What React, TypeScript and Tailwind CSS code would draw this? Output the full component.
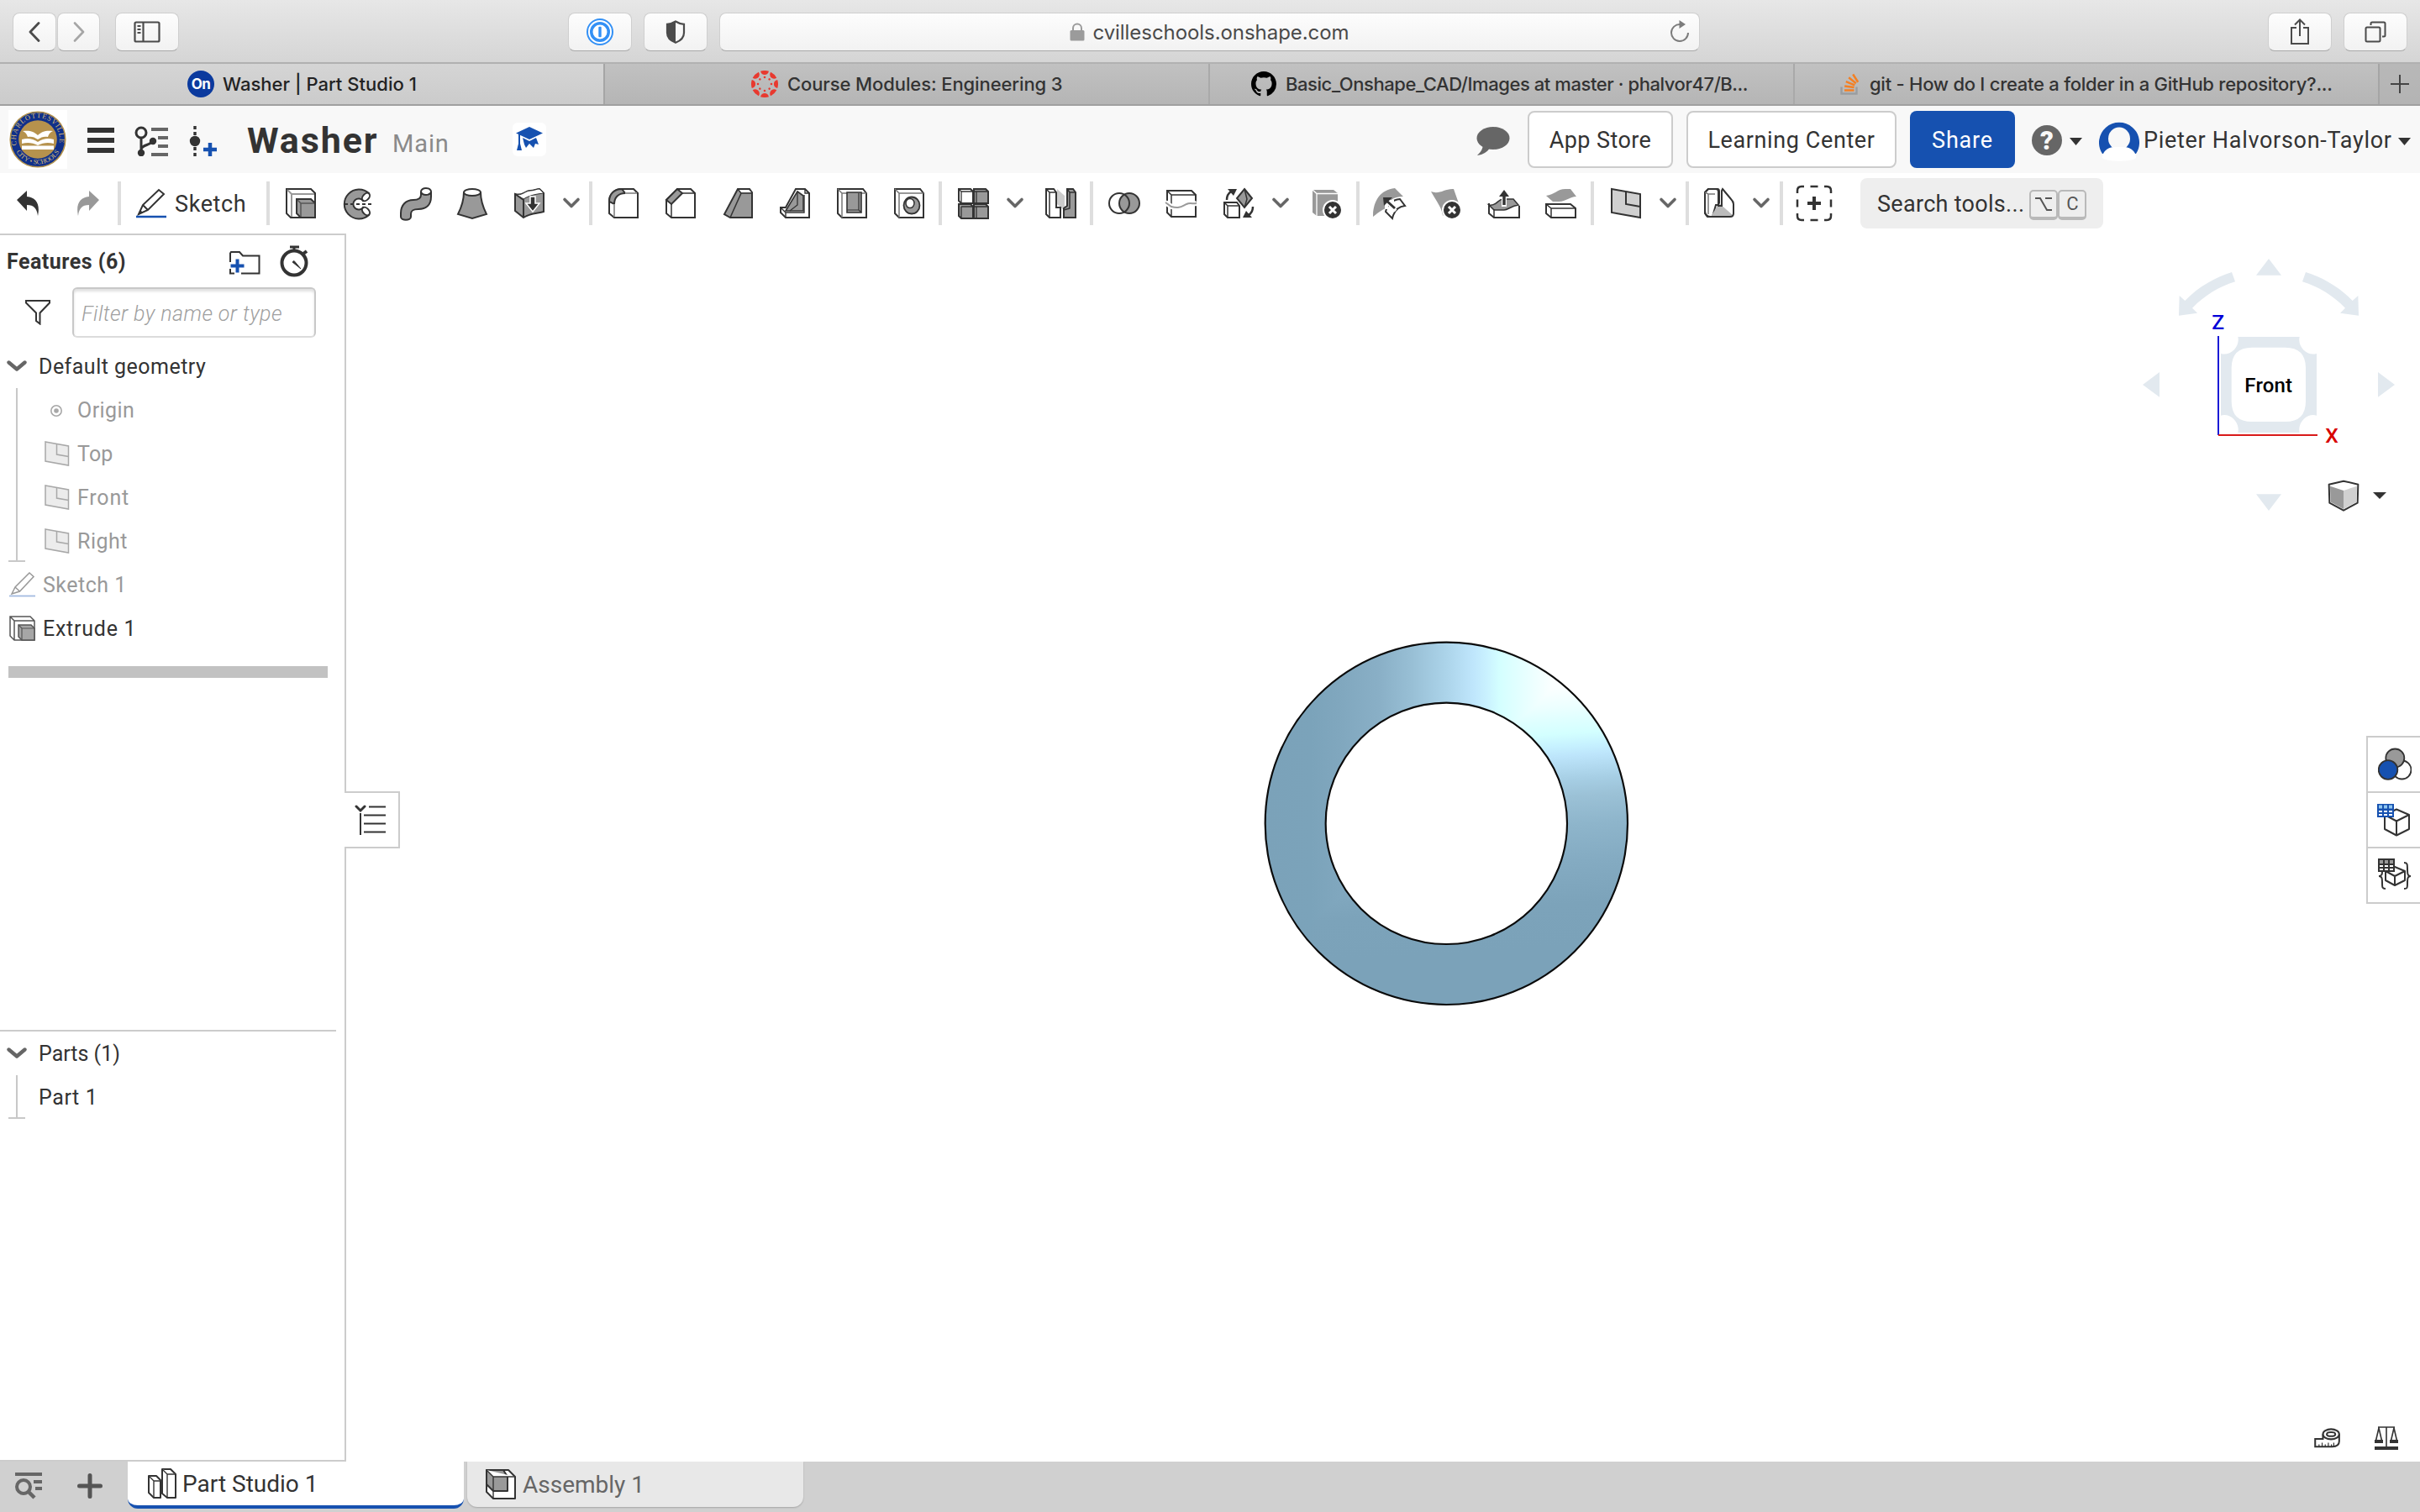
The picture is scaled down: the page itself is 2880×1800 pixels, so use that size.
import type { ReactNode } from "react";

const DARK = "#333333";
const GRAY = "#999999";

/* ---------- shared pieces ---------- */

function ToolIcon({ children }: { children: ReactNode }) {
  return (
    <span className="flex w-[68px] shrink-0 justify-center">
      <svg viewBox="0 0 48 48" className="size-12 overflow-visible" fill="none" stroke={DARK} strokeWidth="2">
        {children}
      </svg>
    </span>
  );
}

function Chevron() {
  return (
    <span className="flex w-8 shrink-0 justify-center">
      <svg viewBox="0 0 20 12" className="h-3 w-5 overflow-visible" fill="none" stroke="#666" strokeWidth="3.6" strokeLinecap="round" strokeLinejoin="round">
        <path d="M2 1.5 10 9.5 18 1.5" />
      </svg>
    </span>
  );
}

function Separator({ className = "" }: { className?: string }) {
  return <span className={`h-[52px] w-1 shrink-0 bg-[#dedede] ${className}`} />;
}

function Caret({ className = "" }: { className?: string }) {
  return (
    <svg viewBox="0 0 15 9" className={`h-[9px] w-[15px] shrink-0 ${className}`}>
      <path d="M0 0h15L7.5 9z" fill={DARK} />
    </svg>
  );
}

function ErrorBadge({ cx, cy }: { cx: number; cy: number }) {
  return (
    <g>
      <circle cx={cx} cy={cy} r="11" fill={DARK} stroke="#fff" strokeWidth="2" />
      <path d={`M${cx - 4} ${cy - 4}l8 8m0-8l-8 8`} stroke="#fff" strokeWidth="3" />
    </g>
  );
}

/* ---------- browser chrome ---------- */

const CHROME_BUTTON =
  "flex h-[46px] shrink-0 items-center justify-center rounded-lg border border-[#cfcfcf] border-b-[#a9a9a9] bg-linear-to-b from-[#fdfdfd] to-[#f2f2f2]";

function BrowserBar() {
  return (
    <div className="flex h-[76px] shrink-0 items-start border-b-2 border-[#b1b1b1] bg-linear-to-b from-[#e7e7e7] to-[#d5d5d5] pt-[15px] pl-[15px]">
      <div className={`${CHROME_BUTTON} w-[52px]`}>
        <svg viewBox="0 0 14 24" className="h-6 w-3.5" fill="none" stroke="#4b4b4b" strokeWidth="2.8" strokeLinecap="round" strokeLinejoin="round">
          <path d="M12 1.5 2 12l10 10.5" />
        </svg>
      </div>
      <div className={`${CHROME_BUTTON} ml-px w-[51px]`}>
        <svg viewBox="0 0 14 24" className="h-6 w-3.5" fill="none" stroke="#a6a6a6" strokeWidth="2.6" strokeLinecap="round" strokeLinejoin="round">
          <path d="M2 1.5 12 12 2 22.5" />
        </svg>
      </div>
      <div className={`${CHROME_BUTTON} ml-[18px] w-[76px]`}>
        <svg viewBox="0 0 32 26" className="h-[26px] w-8" fill="none" stroke="#4b4b4b" strokeWidth="2.2">
          <rect x="1.5" y="1.5" width="29" height="23" rx="1.5" />
          <path d="M11.5 1.5v23M4.5 6h4M4.5 10h4M4.5 14h4" />
        </svg>
      </div>
      <div className={`${CHROME_BUTTON} ml-[463px] w-[76px]`}>
        <svg viewBox="0 0 32 32" className="size-8">
          <circle cx="16" cy="16" r="16" fill="#3390f5" />
          <circle cx="16" cy="16" r="13" fill="none" stroke="#fff" strokeWidth="2" />
          <circle cx="16" cy="16" r="8.5" fill="#fff" />
          <rect x="14.3" y="9.8" width="3.4" height="12.4" rx="1" fill="#3390f5" />
        </svg>
      </div>
      <div className={`${CHROME_BUTTON} ml-[14px] w-[76px]`}>
        <svg viewBox="0 0 24 28" className="h-7 w-6">
          <path d="M12 1.5C9 3.5 5 4.5 2 4.8V15c0 5 4 9.5 10 11.8C18 24.5 22 20 22 15V4.8C19 4.5 15 3.5 12 1.5z" fill="none" stroke="#4b4b4b" strokeWidth="2.2" />
          <path d="M12 1.5C9 3.5 5 4.5 2 4.8V15c0 5 4 9.5 10 11.8z" fill="#4b4b4b" />
        </svg>
      </div>
      <div className={`${CHROME_BUTTON} relative ml-[14px] w-[1167px]`}>
        <svg viewBox="0 0 18 22" className="mr-[9px] h-[22px] w-[18px]">
          <rect x="0.5" y="9" width="17" height="12.5" rx="1.5" fill="#9b9b9b" />
          <path d="M4 10V6.500a5 5 0 0 1 10 0V10" fill="none" stroke="#9b9b9b" strokeWidth="2" />
        </svg>
        <span className="pt-0.5 text-[24px] tracking-[-0.06px] text-[#4a4a4a]">cvilleschools.onshape.com</span>
        <svg viewBox="0 0 24 26" className="absolute top-[8px] right-[11px] h-[26px] w-6" fill="none" stroke="#7c7c7c" strokeWidth="2">
          <path d="M12.5 5A10 10 0 1 0 22 15" />
          <path d="M11.5 0 19 5l-7.500 5z" fill="#7c7c7c" stroke="none" />
        </svg>
      </div>
      <div className={`${CHROME_BUTTON} ml-[676px] w-[76px]`}>
        <svg viewBox="0 0 24 32" className="h-8 w-6" fill="none" stroke="#4b4b4b" strokeWidth="2">
          <path d="M8 11H2v19h20V11h-6M12 21V2M6 7.500 12 1.500l6 6" />
        </svg>
      </div>
      <div className={`${CHROME_BUTTON} ml-[14px] w-[76px]`}>
        <svg viewBox="0 0 26 26" className="size-[26px]" fill="none" stroke="#4b4b4b" strokeWidth="2">
          <rect x="1.5" y="7.5" width="17" height="17" rx="1.5" />
          <path d="M7.500 5V3c0-1 .5-1.500 1.500-1.500h14c1 0 1.500.5 1.500 1.500v14c0 1-.5 1.500-1.500 1.500h-2" />
        </svg>
      </div>
    </div>
  );
}

function CanvasLogo() {
  const spokes = [0, 45, 90, 135, 180, 225, 270, 315];
  return (
    <svg viewBox="-16 -16 32 32" className="size-8 shrink-0" fill="#e8392f">
      {spokes.map((a) => (
        <g key={a} transform={`rotate(${a})`}>
          <path d="M-5-15.200A16 16 0 0 1 5-15.200C4-9.500-4-9.500-5-15.200z" />
          <circle cx="0" cy="-8" r="1.3" />
        </g>
      ))}
    </svg>
  );
}

function BrowserTabs() {
  return (
    <div className="flex h-[50px] shrink-0 border-b-2 border-[#a0a0a0] bg-linear-to-b from-[#c1c1c1] to-[#b5b5b5] text-[22px] font-medium text-[#333]">
      <div className="flex w-[718px] shrink-0 items-center bg-linear-to-b from-[#d5d5d5] to-[#cbcbcb] pl-[223px] text-[#222]">
        <span className="flex size-8 shrink-0 items-center justify-center rounded-full bg-[#0b3a9e] text-[17px] font-bold tracking-[-0.5px] text-white">On</span>
        <span className="ml-[10px] tracking-[0.02px] whitespace-nowrap">Washer | Part Studio 1</span>
      </div>
      <div className="flex w-[720px] shrink-0 items-center border-l-2 border-[#a5a5a5] pl-[174px]">
        <CanvasLogo />
        <span className="ml-[11px] tracking-[-0.1px] whitespace-nowrap">Course Modules: Engineering 3</span>
      </div>
      <div className="flex w-[696px] shrink-0 items-center border-l-2 border-[#a9a9a9] pl-[49px]">
        <svg viewBox="0 0 16 16" className="size-[30px] shrink-0">
          <path fill="#000" fillRule="evenodd" d="M8 0C3.580 0 0 3.580 0 8c0 3.540 2.290 6.530 5.470 7.590.4.070.55-.17.55-.38 0-.19-.01-.82-.01-1.490-2.010.37-2.530-.49-2.690-.94-.09-.23-.48-.94-.82-1.130-.28-.15-.68-.52-.01-.53.63-.01 1.080.58 1.230.82.72 1.210 1.870.87 2.330.66.07-.52.28-.87.51-1.070-1.780-.2-3.640-.89-3.640-3.950 0-.87.31-1.590.82-2.150-.08-.2-.36-1.020.08-2.120 0 0 .67-.21 2.200.82.64-.18 1.320-.27 2-.27s1.360.09 2 .27c1.530-1.040 2.200-.82 2.200-.82.44 1.100.16 1.920.08 2.120.51.56.82 1.270.82 2.150 0 3.070-1.870 3.750-3.650 3.950.29.25.54.73.54 1.480 0 1.070-.01 1.930-.01 2.200 0 .21.15.46.55.38A8.010 8.010 0 0 0 16 8c0-4.420-3.580-8-8-8z" />
        </svg>
        <span className="ml-[11px] tracking-[-0.43px] whitespace-nowrap">Basic_Onshape_CAD/Images at master · phalvor47/B...</span>
      </div>
      <div className="flex w-[696px] shrink-0 items-center border-l-2 border-[#a9a9a9] pl-[54px]">
        <svg viewBox="0 0 24 26" className="h-[26px] w-6 shrink-0" fill="none">
          <path d="M1.500 16.500v8h18v-8" stroke="#9a9da0" strokeWidth="2.4" />
          <path d="M5 20.500h11.500M5.200 15.500l11.400 1.600M6.800 10.200l10.500 4.200M10.200 5.300l8.600 7M15.200 1.500l6 9.200" stroke="#f48024" strokeWidth="2.5" />
        </svg>
        <span className="ml-[11px] tracking-[-0.26px] whitespace-nowrap">git - How do I create a folder in a GitHub repository?...</span>
      </div>
      <div className="flex flex-1 items-center justify-center border-l-2 border-[#a5a5a5] bg-[#b3b3b3]/60">
        <svg viewBox="0 0 22 22" className="size-[22px]" stroke="#444" strokeWidth="2">
          <path d="M11 0v22M0 11h22" />
        </svg>
      </div>
    </div>
  );
}

/* ---------- document header ---------- */

function SchoolSeal() {
  return (
    <svg viewBox="0 0 70 70" className="size-[70px] shrink-0 bg-white">
      <defs>
        <path id="sealTop" d="M9.9 42A26 26 0 1 1 60.1 42" />
        <path id="sealBottom" d="M7.500 46A29.700 29.700 0 0 0 62.500 46" />
      </defs>
      <circle cx="35" cy="35" r="32.800" fill="#10308a" stroke="#b3924c" strokeWidth="1.6" />
      <circle cx="35" cy="35" r="22.800" fill="#b6924d" />
      <path d="M17 25c8-1 13 0 18 5 5-5 10-6 18-5-4 2-5 4-6 7-4-1-8 0-12 3-4-3-8-4-12-3-1-3-2-5-6-7zM16 35c7-2 13-1 19 3 6-4 12-5 19-3v5c-7-2-13-1-19 2-6-3-12-4-19-2zM16 42.500h38v4.500H16z" fill="#fff" />
      <g fill="#d9bd78" fontFamily="Liberation Serif, serif" fontSize="8.500">
        <text textLength="92" lengthAdjust="spacing">
          <textPath href="#sealTop">CHARLOTTESVILLE</textPath>
        </text>
        <text fontSize="8" textLength="62">
          <textPath href="#sealBottom" startOffset="4">CITY • SCHOOLS</textPath>
        </text>
      </g>
    </svg>
  );
}

function DocumentHeader() {
  return (
    <header className="flex h-20 shrink-0 items-center bg-[#f8f8f8] font-['Roboto'] text-[27px] text-[#333]">
      <div className="ml-[10px] -mt-[1px]">
        <SchoolSeal />
      </div>
      <div className="ml-6 mt-[2px] flex w-8 flex-col gap-1.5">
        <span className="h-1.5 bg-[#333]" />
        <span className="h-1.5 bg-[#333]" />
        <span className="h-1.5 bg-[#333]" />
      </div>
      <svg viewBox="0 0 40 36" className="mt-1 ml-6 h-9 w-10" fill="none">
        <circle cx="8" cy="8" r="6" stroke={DARK} strokeWidth="3" />
        <path d="M8 14v16M8 28c1-7 13-4 14-12" stroke={DARK} strokeWidth="3" />
        <circle cx="8" cy="32" r="4.2" fill={DARK} />
        <circle cx="22" cy="18" r="4.2" fill={DARK} />
        <path d="M20 4h20M28 14h12M28 24h12M20 34h20" stroke="#666" strokeWidth="4" />
      </svg>
      <svg viewBox="0 0 34 38" className="mt-1 ml-[25px] h-[38px] w-[34px]" fill="none">
        <path d="M7 1v4M7 8v4M7 26v4M7 33v4" stroke={DARK} strokeWidth="3.4" />
        <circle cx="7" cy="19" r="6.2" fill={DARK} />
        <path d="M25 21v16M17 29h16" stroke="#1651b0" strokeWidth="4.5" />
      </svg>
      <span className="mt-0.5 ml-[35px] w-[173px] text-[43px] leading-none font-bold tracking-[1.9px]">Washer</span>
      <span className="mt-2.5 w-[143px] text-[29px] tracking-[0.9px] text-[#8a8a8a]">Main</span>
      <span className="flex size-10 shrink-0 items-center justify-center rounded-md bg-white">
        <svg viewBox="0 0 32 30" className="h-[30px] w-8 overflow-visible" fill="#1651b0">
          <path d="M16 0 32 7.500 16 15 0 7.500zM3 8.500h2V20l2 8H1l2-8zM8 13l8 4 8-4 3 8-4-1-2 5-5-5-4 5-2-4z" />
        </svg>
      </span>

      <div className="ml-auto flex items-center pr-[11px]">
        <svg viewBox="0 0 40 34" className="mt-1 h-[34px] w-10" fill="#666">
          <ellipse cx="20" cy="13.500" rx="19.500" ry="13.500" />
          <path d="M8 22C7 28 4 31 1 34c7-1 12-4 15-9z" />
        </svg>
        <div className="ml-[21px] flex h-[68px] w-[173px] items-center justify-center rounded-lg border-2 border-[#ccc] bg-white pt-0.5 tracking-[0.43px]">App Store</div>
        <div className="ml-4 flex h-[68px] w-[250px] items-center justify-center rounded-lg border-2 border-[#ccc] bg-white pt-0.5 tracking-[0.6px]">Learning Center</div>
        <div className="ml-4 flex h-[68px] w-[125px] items-center justify-center rounded-lg bg-[#1651b0] pt-0.5 tracking-[0.8px] text-white">Share</div>
        <span className="mt-0.5 ml-5 flex size-9 items-center justify-center rounded-full bg-[#666] text-[31px] leading-none font-black text-[#f8f8f8]">?</span>
        <Caret className="mt-1 ml-[9px]" />
        <svg viewBox="0 0 48 48" className="mt-1 ml-[20px] size-12">
          <path d="M4 39A24 24 0 1 1 44 39z" fill="#1651b0" />
          <ellipse cx="24" cy="21" rx="13" ry="13.500" fill="#f8f8f8" />
          <path d="M4 44c0-8 6-12 13-13h14c7 1 13 5 13 13-5 5-35 5-40 0z" fill="#fff" />
        </svg>
        <span className="mt-0.5 ml-[5px] w-[303px] tracking-[0.7px] whitespace-nowrap">Pieter Halvorson-Taylor</span>
        <Caret className="mt-1" />
      </div>
    </header>
  );
}

/* ---------- toolbar ---------- */

const CUBE = "M7 7h30l4 5v29H12l-5-5z";

function Toolbar() {
  return (
    <div className="flex h-[72px] shrink-0 items-center bg-white font-['Roboto'] text-[27px] text-[#333]">
      <svg viewBox="0 0 28 30" className="ml-5 h-[30px] w-7">
        <path d="M0 11 12 0v7c11 1 16 9 13 23-1-8-4-13-13-13v7z" fill={DARK} />
      </svg>
      <svg viewBox="0 0 28 30" className="ml-[42px] h-[30px] w-7">
        <path d="M28 11 16 0v7C5 8 0 16 3 30c1-8 4-13 13-13v7z" fill={GRAY} />
      </svg>
      <Separator className="ml-[22px]" />
      <svg viewBox="0 0 36 36" className="ml-[18px] size-9" fill="none">
        <path d="M3 31 8 20 27 2l6 5-19 19zM8 20l6 6" stroke={DARK} strokeWidth="2" />
        <path d="M3 31l2-5 3 3z" fill={DARK} />
        <path d="M0 34h36" stroke="#1651b0" strokeWidth="2.6" />
      </svg>
      <span className="mt-0.5 ml-[10px] w-[109px] tracking-[0.6px]">Sketch</span>
      <Separator className="mr-[3px]" />

      <ToolIcon>
        <path d="M7 7h29l5 5v29H12l-5-5z" />
        <path d="M8 8l5 5h27M13 13v27" stroke={GRAY} />
        <path d="M19 19h17l5 5v17H24l-5-5z" fill={GRAY} />
        <path d="M20 20l4 4h16M24 24v16" stroke="#555" strokeWidth="1.5" />
      </ToolIcon>
      <ToolIcon>
        <path d="M37 12A17.500 17.500 0 1 0 37 38L30 29A6.500 6.500 0 1 1 30 21z" fill={GRAY} />
        <ellipse cx="33.5" cy="16.5" rx="5.5" ry="3.6" transform="rotate(-48 33.5 16.5)" fill="#fff" />
        <ellipse cx="33.5" cy="33.5" rx="5.5" ry="3.6" transform="rotate(48 33.5 33.5)" fill="#fff" />
        <path d="M8 25h34" strokeDasharray="4 3" />
      </ToolIcon>
      <ToolIcon>
        <path d="M43 10v6c0 10-6 15-15 15-7 0-9 2-9 6v3c0 5-12 5-12 0v-4c0-10 6-16 15-16 6 0 9-2 9-6v-4" fill={GRAY} />
        <ellipse cx="37" cy="10" rx="6" ry="4" fill="#fff" />
      </ToolIcon>
      <ToolIcon>
        <path d="M14 11c0 11-4 20-7 26l17 5 17-5c-3-6-7-15-7-26" fill={GRAY} />
        <ellipse cx="24" cy="11" rx="10" ry="4" fill="#fff" />
      </ToolIcon>
      <ToolIcon>
        <path d="M7 13c8 3 12-4 18-4 5 0 7-2 11-2l5 5v22c-8 2-17 2-24 7L7 33z" fill={GRAY} />
        <path d="M7 13c8 3 12-4 18-4 5 0 7-2 11-2l5 5c-8 1-16 2-24 7z" fill="#fff" strokeWidth="1" />
        <path d="M7 13l10 7v21" />
        <path d="M25 16h6v8h5l-8 10-8-10h5z" fill={DARK} stroke="#fff" strokeWidth="1.5" />
      </ToolIcon>
      <Chevron />
      <Separator className="mr-[3px] ml-[5px]" />

      <ToolIcon>
        <path d="M7 22C7 13 13 7 22 7h14l5 5v29H13l-6-5z" />
        <path d="M7 22C7 13 13 7 22 7l4 5c-8 0-13 5-13 13z" fill={GRAY} />
        <path d="M26 12h14M13 25v15" stroke={GRAY} />
      </ToolIcon>
      <ToolIcon>
        <path d="M7 20 20 7h16l5 5v29H13l-6-5z" />
        <path d="M7 20 20 7l6 5-13 13z" fill={GRAY} />
        <path d="M26 12h15M13 25v15" strokeWidth="1.5" />
      </ToolIcon>
      <ToolIcon>
        <path d="M24 7h14l3 4v30H15l-7-4z" fill={GRAY} />
        <path d="M25 8h12l3 3H28z" fill="#fff" stroke="none" />
        <path d="M24 7l4 5L15 41M28 12h13" strokeWidth="1.5" />
      </ToolIcon>
      <ToolIcon>
        <path d="M7 29h6L25 7h11l5 5v29H13l-6-6z" fill="#fff" />
        <path d="M7 29l6 6h22V14M13 35v6M36 7v5h5" strokeWidth="1.4" />
        <path d="M13 33 27 10l7 5v18z" fill={GRAY} strokeWidth="1.6" />
        <path d="M27 10v16l-9 7" strokeWidth="1.3" />
      </ToolIcon>
      <ToolIcon>
        <path d={CUBE} />
        <path d="M7 7l5 5v29M12 12h29" strokeWidth="1.5" stroke="#777" />
        <path d="M18 11h17v24H18z" fill={GRAY} strokeWidth="1.6" />
        <path d="M18 32h14M32 12v20l3 3" strokeWidth="1.2" />
      </ToolIcon>
      <ToolIcon>
        <path d={CUBE} />
        <path d="M7 7l5 5v29M12 12h29" strokeWidth="1.5" stroke="#777" />
        <ellipse cx="27" cy="26.5" rx="9.5" ry="10" fill={GRAY} strokeWidth="1.8" />
        <ellipse cx="25" cy="24" rx="5" ry="5.5" fill="#fff" strokeWidth="1.5" />
      </ToolIcon>
      <Separator className="ml-px mr-[3px]" />

      <ToolIcon>
        <path d="M7 7h14l3 3v14H10l-3-3z" />
        <path d="M25 7h14l3 3v14H25zM7 25h14l3 3v14H10l-3-3zM25 25h14l3 3v14H25z" fill={GRAY} />
        <path d="M7 7l3 3h14M10 10v14M25 10h17M28 10v14M10 28h14M10 28v14M25 28h17M28 28v14" strokeWidth="1.3" />
      </ToolIcon>
      <Chevron />
      <span className="w-1" />
      <ToolIcon>
        <path d="M20 7l9 8v18l-9-8z" fill="#ccc" stroke="none" />
        <path d="M7 7h9l3 4v18h5v12H11l-4-4z" fill="#fff" />
        <path d="M7 7l4 4v30M11 11h8" strokeWidth="1.5" />
        <path d="M32 7h7l3 4v30H28V30l4-3z" fill={GRAY} />
        <path d="M32 7l3 4v19l-7 2M35 11h7" strokeWidth="1.5" />
      </ToolIcon>
      <Separator className="mr-[3px] ml-px" />

      <ToolIcon>
        <circle cx="30" cy="24" r="12" fill={GRAY} />
        <circle cx="18" cy="24" r="12" />
      </ToolIcon>
      <ToolIcon>
        <path d="M7 9h29l5 5v26H12l-5-5z" />
        <path d="M7 9l5 5h29M12 14v26" strokeWidth="1.5" />
        <path d="M5 23l7 5c10 3 13-1 18-3 4-2 8 0 12-1" stroke="#fff" strokeWidth="6" />
        <path d="M5 23l7 5c10 3 13-1 18-3 4-2 8 0 12-1" stroke={GRAY} />
      </ToolIcon>
      <ToolIcon>
        <path d="M31 7l9 11-9 11-9-11z" fill={GRAY} />
        <path d="M31 7l3 12-3 10" strokeWidth="1.5" />
        <path d="M7 23h15l3 4v14H11l-4-4z" fill="#fff" />
        <path d="M7 23l4 4h14M11 27v14" strokeWidth="1.5" />
        <path d="M10 20c0-5 2-8 5-10M41 28c0 5-2 8-5 10" strokeWidth="2.5" />
        <path d="M11 7h11l-4 8zM40 41H29l4-8z" fill={DARK} stroke="none" />
      </ToolIcon>
      <Chevron />
      <span className="w-1.5" />
      <ToolIcon>
        <path d="M6 8h25l5 4v27H11l-5-4z" fill={GRAY} stroke="none" />
        <path d="M6 8l5 4.500h25M11 12v27" stroke="#fff" strokeWidth="1.3" />
        <ErrorBadge cx={30} cy={32} />
      </ToolIcon>
      <Separator className="mr-[2px]" />

      <ToolIcon>
        <path d="M4 40C4 22 12 8 30 6l10 10c-12 0-18 5-21 14-6 3-10 6-15 10z" fill={GRAY} stroke="none" />
        <path d="M19 34c2-9 7-14 17-15l6 8c-9 1-13 6-15 15z" fill="#fff" />
        <path d="M31 33 20 22m0 0h9m-9 0v9" strokeWidth="4" stroke="#fff" />
        <path d="M30 30 19 20" strokeWidth="3" />
        <path d="M16 17h11L17 27z" fill={DARK} stroke="none" />
      </ToolIcon>
      <ToolIcon>
        <path d="M5 10c10 4 17-4 27-3l7 20c-8 0-13 3-20 12-1-10-8-18-14-29z" fill={GRAY} stroke="none" />
        <ErrorBadge cx={30} cy={32} />
      </ToolIcon>
      <ToolIcon>
        <path d="M6 24v12l6 5h30V27" fill="#fff" />
        <path d="M6 26c8 2 10-6 16-7h13l6 7c-9 1-12 6-17 6H12z" fill={GRAY} strokeWidth="1.6" />
        <path d="M12 31v10" strokeWidth="1.5" />
        <path d="M24 28V12" stroke="#fff" strokeWidth="6" />
        <path d="M24 26V14" strokeWidth="3.5" />
        <path d="M24 8l6 8H18z" fill={DARK} stroke="none" />
      </ToolIcon>
      <ToolIcon>
        <path d="M6 15C16 14 19 7 29 7h6l7 9c-8 0-12 6-21 6h-7z" fill={GRAY} stroke="none" />
        <path d="M6 25h29l6 5v11H12l-6-5z" />
        <path d="M6 25l6 5h29M12 30v11" strokeWidth="1.5" />
      </ToolIcon>
      <Separator className="mr-[4px] ml-px" />

      <ToolIcon>
        <path d="M7 7l34 6v28L7 35z" fill="#d0d0d0" />
        <path d="M24 10v15l17 3" fill="none" />
      </ToolIcon>
      <Chevron />
      <Separator className="mr-[2px] ml-[5px]" />
      <ToolIcon>
        <path d="M7 11l4-4h11q2 0 2 3v16l-4 0-4 14h-6l-3-4z" fill="#fff" />
        <path d="M24 24l16 14-4 2H14l6-10z" fill="#bbb" stroke="none" />
        <path d="M28 7l10 12q3 3 3 6v11q0 4-4 4H14q-7 0-7-7V11l4-4h9q3 0 3 3v17h4V9z" strokeWidth="2" />
        <path d="M7 11l4 2v24M11 13h8" strokeWidth="1.5" stroke="#777" />
      </ToolIcon>
      <Chevron />
      <Separator className="mr-[3px] ml-[6px]" />
      <ToolIcon>
        <path d="M4 12V9q0-5 5-5h3M36 4h3q5 0 5 5v3M44 36v3q0 5-5 5h-3M12 44H9q-5 0-5-5v-3M19.500 4h9M19.500 44h9M4 19.500v9M44 19.500v9" strokeWidth="2.5" />
        <path d="M24 16v16M16 24h16" strokeWidth="4" />
      </ToolIcon>

      <div className="ml-[21px] flex h-[60px] w-[289px] items-center rounded-lg bg-[#eeeeee] pl-5">
        <span className="pt-0.5 tracking-[0.3px] whitespace-nowrap">Search tools...</span>
        <span className="mt-1 ml-1.5 flex h-9 w-[34px] shrink-0 items-center justify-center rounded-[5px] border-2 border-b-4 border-[#b9b9b9]">
          <svg viewBox="0 0 20 18" className="h-[18px] w-5" fill="none" stroke="#555" strokeWidth="2">
            <path d="M0 2h6l8 14h6M12 2h8" />
          </svg>
        </span>
        <span className="mt-1 flex h-9 w-[34px] shrink-0 items-center justify-center rounded-[5px] border-2 border-b-4 border-[#b9b9b9] text-[22px] text-[#555]">C</span>
      </div>
    </div>
  );
}

/* ---------- feature list ---------- */

function TreeChevron() {
  return (
    <svg viewBox="0 0 24 14" className="ml-2 h-3.5 w-6 shrink-0" fill="none" stroke="#666" strokeWidth="4.4" strokeLinecap="round" strokeLinejoin="round">
      <path d="M2.500 2.500 12 10.500 21.500 2.500" />
    </svg>
  );
}

function PlaneIcon() {
  return (
    <svg viewBox="0 0 30 30" className="size-[30px] shrink-0" stroke="#a8a8a8" strokeWidth="1.5">
      <path d="M1 1l27.500 5v23L1 24z" fill="#ececec" />
      <path d="M14.500 3.500V16l14 2.500" fill="none" />
    </svg>
  );
}

function FeaturePanel() {
  return (
    <aside className="flex w-[412px] shrink-0 flex-col border-t-2 border-r-2 border-b-2 border-[#cccccc] bg-white font-['Roboto'] text-[25px] text-[#333]">
      <div className="flex h-[62px] items-center pl-2">
        <span className="tracking-[0.5px] font-bold">Features (6)</span>
        <svg viewBox="0 0 38 28" className="mt-1 ml-auto h-7 w-[38px] overflow-visible" fill="none">
          <path d="M2 13V2.500L3 1h10l4 4.500h19.500V26.500H15M2 21v5.500h5" stroke={DARK} strokeWidth="2" />
          <path d="M10.500 9.500v16M2.500 17.500h16" stroke="#1651b0" strokeWidth="4" />
        </svg>
        <svg viewBox="0 0 34 36" className="mr-[42px] ml-[24px] h-9 w-[34px] overflow-visible" fill="none" stroke={DARK}>
          <circle cx="16" cy="20" r="14.500" strokeWidth="4" />
          <path d="M11 1h11M16 1v4" strokeWidth="3" />
          <path d="M27 9l4-3" strokeWidth="4" />
          <path d="M14 19l2-1.500 8 9.500z" fill={DARK} strokeWidth="1" />
        </svg>
      </div>
      <div className="flex h-[60px] items-center">
        <svg viewBox="0 0 30 30" className="ml-[30px] h-[30px] w-[30px]" fill="none" stroke={DARK} strokeWidth="2">
          <path d="M1 1h28v2.500L17.500 15.500v13L13 25V15.500L1 3.500z" />
        </svg>
        <div className="ml-[26px] flex h-[60px] w-[290px] items-center rounded-md border-2 border-[#c8c8c8] border-b-[#dcdcdc] font-light tracking-[0.43px] text-[#a0a0a0] italic shadow-[inset_0_3px_3px_rgba(0,0,0,0.12)]">
          <span className="pt-0.5 pl-[9px]">Filter by name or type</span>
        </div>
      </div>

      <div className="mt-[8px] flex h-[52px] items-center">
        <TreeChevron />
        <span className="ml-[14px] tracking-[0.48px]">Default geometry</span>
      </div>
      <div className="flex h-[208px] text-[#999]">
        <div className="ml-[10px] flex h-[207px] w-5 flex-col items-center">
          <span className="w-0.5 flex-1 bg-[#c8c8c8]" />
          <span className="h-0.5 w-full bg-[#c8c8c8]" />
        </div>
        <div className="ml-[23px] flex flex-col">
          <div className="flex h-[52px] items-center">
            <svg viewBox="0 0 30 30" className="size-[30px]">
              <circle cx="14" cy="16" r="6.200" fill="none" stroke="#a8a8a8" strokeWidth="1.6" />
              <circle cx="14" cy="16" r="2.800" fill="#a8a8a8" />
            </svg>
            <span className="ml-[9px] tracking-[0.43px]">Origin</span>
          </div>
          <div className="flex h-[52px] items-center">
            <PlaneIcon />
            <span className="ml-[9px] tracking-[0.2px]">Top</span>
          </div>
          <div className="flex h-[52px] items-center">
            <PlaneIcon />
            <span className="ml-[9px] tracking-[0.8px]">Front</span>
          </div>
          <div className="flex h-[52px] items-center">
            <PlaneIcon />
            <span className="ml-[9px] tracking-[0.5px]">Right</span>
          </div>
        </div>
      </div>
      <div className="flex h-[52px] items-center pl-[11px] text-[#999]">
        <svg viewBox="0 0 31 30" className="h-[30px] w-[31px]" fill="none" stroke="#999" strokeWidth="1.5">
          <path d="M3 26l4-8L24 1l5 4.500L12.500 23zM7 18l5.500 5" />
          <path d="M0 28.500h31" stroke="#a3bbe0" strokeWidth="1.8" />
        </svg>
        <span className="ml-[9px] tracking-[0.5px]">Sketch 1</span>
      </div>
      <div className="flex h-[52px] items-center pl-[11px]">
        <svg viewBox="0 0 31 30" className="h-[30px] w-[31px]" fill="none" stroke="#555" strokeWidth="1.5">
          <path d="M1 1h24l5 5v23H6l-5-5zM1 1l5 5h24M6 6v23" />
          <path d="M11 11h15l4 4v14H15l-4-4z" fill="#a6a6a6" />
          <path d="M11 11l4 4h15M15 15v14" strokeWidth="1.2" />
        </svg>
        <span className="ml-[9px] tracking-[0.75px]">Extrude 1</span>
      </div>
      <div className="mt-[19px] ml-[10px] h-[14px] w-[380px] shrink-0 bg-[#c2c2c2]" />

      <div className="mt-auto h-[512px]">
        <div className="h-0.5 w-[400px] bg-[#cccccc]" />
        <div className="flex h-[52px] items-center">
          <TreeChevron />
          <span className="ml-[14px]">Parts (1)</span>
        </div>
        <div className="flex h-[52px]">
          <div className="ml-[10px] flex h-[52px] w-5 flex-col items-center">
            <span className="w-0.5 flex-1 bg-[#c8c8c8]" />
            <span className="h-0.5 w-full bg-[#c8c8c8]" />
          </div>
          <span className="ml-[16px] flex h-[52px] items-center tracking-[0.6px]">Part 1</span>
        </div>
      </div>
    </aside>
  );
}

/* ---------- canvas ---------- */

function WasherModel() {
  return (
    <svg viewBox="0 0 1440 1440" className="absolute top-[462px] left-[1068px] isolate size-[480px]">
      <defs>
        <linearGradient id="shadeX" gradientUnits="userSpaceOnUse" x1="75" y1="0" x2="1375" y2="0">
          <stop offset="0" stopColor="#7ba2b9" />
          <stop offset="0.127" stopColor="#7ba3ba" />
          <stop offset="0.204" stopColor="#80a7be" />
          <stop offset="0.312" stopColor="#89afc6" />
          <stop offset="0.404" stopColor="#98bfd5" />
          <stop offset="0.500" stopColor="#acd4ea" />
          <stop offset="0.573" stopColor="#bfe6fc" />
          <stop offset="0.612" stopColor="#caf2ff" />
          <stop offset="0.646" stopColor="#d4ffff" />
          <stop offset="0.712" stopColor="#e6ffff" />
          <stop offset="0.790" stopColor="#fbffff" />
        </linearGradient>
        <linearGradient id="shadeY" gradientUnits="userSpaceOnUse" x1="1200" y1="150" x2="1270" y2="1150">
          <stop offset="0.080" stopColor="#fbffff" />
          <stop offset="0.150" stopColor="#ecffff" />
          <stop offset="0.200" stopColor="#deffff" />
          <stop offset="0.245" stopColor="#d3ffff" />
          <stop offset="0.290" stopColor="#c6f1ff" />
          <stop offset="0.325" stopColor="#bde5fb" />
          <stop offset="0.410" stopColor="#a6cee4" />
          <stop offset="0.470" stopColor="#9bc1d6" />
          <stop offset="0.570" stopColor="#8eb5cb" />
          <stop offset="0.700" stopColor="#84abc2" />
          <stop offset="0.850" stopColor="#7ca3ba" />
          <stop offset="1" stopColor="#7ba2b9" />
        </linearGradient>
        <clipPath id="ring">
          <path clipRule="evenodd" d="M76 721a648 648 0 1 0 1296 0a648 648 0 1 0-1296 0zM293 721a431 431 0 1 0 862 0a431 431 0 1 0-862 0z" />
        </clipPath>
      </defs>
      <g clipPath="url(#ring)">
        <rect width="1440" height="1440" fill="url(#shadeX)" />
        <rect width="1440" height="1440" fill="url(#shadeY)" className="mix-blend-darken" />
      </g>
      <circle cx="724" cy="721" r="647" fill="none" stroke="#0a0a0a" strokeWidth="6.500" />
      <circle cx="724" cy="721" r="431" fill="none" stroke="#0a0a0a" strokeWidth="6.500" />
    </svg>
  );
}

function ViewCube() {
  return (
    <svg viewBox="0 0 1200 1050" className="absolute top-0.5 right-0 h-[350px] w-[400px]">
      <g fill="#e2e9ef">
        <path d="M660 84l45 59h-90zM660 984l45-59h-90zM210 534l60-45v89zM1110 534l-60-45v89z" />
        <path d="M528 132l12 34C480 185 430 216 387 260l18 18-66 9 2-71 20 18C410 183 470 150 528 132z" />
        <path d="M792 132l-12 34c60 19 110 50 153 94l-18 18 66 9-2-71-20 18c-49-51-109-84-167-102z" />
        <path fillRule="evenodd" d="M550 363h220c-8 34 26 70 61 60v221c-35-10-69 26-61 61H550c8-35-26-71-61-61V423c35 10 69-26 61-60zM600 401q-73 0-73 73v119q0 73 73 73h119q73 0 73-73V474q0-73-73-73z" />
      </g>
      <path d="M480 360v354" stroke="#1a1ad6" strokeWidth="6" />
      <path d="M480 714h354" stroke="#d81a1a" strokeWidth="6" />
      <g fontFamily="Roboto, sans-serif" textAnchor="middle">
        <text x="659" y="561" fontSize="72" fontWeight="500" textLength="170" fill="#000">Front</text>
        <text x="479" y="337" fontSize="74" fontWeight="500" fill="#0000d8">Z</text>
        <text x="885" y="741" fontSize="74" fontWeight="500" fill="#d80000">X</text>
      </g>
      <path d="M927 878l52 12-2 66-50 27-50-27-2-66z" fill="#fff" stroke={DARK} strokeWidth="6" strokeLinejoin="round" />
      <path d="M879 896l48 16v66l-46-25z" fill="#999" />
      <path d="M975 896l-48 16v66l46-25z" fill="#d0d0d0" />
      <path d="M1032 918h48l-24 24z" fill={DARK} />
    </svg>
  );
}

function RightRail() {
  return (
    <div className="absolute top-[598px] right-0 flex w-16 flex-col divide-y-2 divide-[#cccccc] border-2 border-r-0 border-[#cccccc] bg-white">
      <div className="flex h-[66px] items-center pl-3">
        <svg viewBox="0 0 40 40" className="size-10" stroke={DARK} strokeWidth="1.800">
          <circle cx="28.500" cy="26.500" r="11" fill="#fff" />
          <circle cx="20.300" cy="12.500" r="11" fill="#999" />
          <circle cx="12" cy="26.500" r="11.300" fill="#1651b0" />
        </svg>
      </div>
      <div className="flex h-[66px] items-center pl-3">
        <svg viewBox="0 0 40 40" className="size-10 -ml-px" fill="none">
          <path d="M9 14 23 7.500l15 6.500v17l-15 7.500L9 31zM9 14l14 7.500L38 14M23 21.500v17" stroke={DARK} strokeWidth="2" strokeLinejoin="round" />
          <rect x="0" y="1" width="20" height="16" fill="#1651b0" />
          <path d="M2 2.500h4v4H2zM8 2.500h4v4H8zM14 2.500h4v4h-4z" fill="#8fc6ef" />
          <path d="M2 9h4v2H2zM8 9h4v2H8zM14 9h4v2h-4zM2 13h4v2H2zM8 13h4v2H8zM14 13h4v2h-4z" fill="#fff" />
        </svg>
      </div>
      <div className="flex h-16 items-center pl-3">
        <svg viewBox="0 0 40 40" className="size-10" fill="none">
          <path d="M9 15l11-5 12 5v11l-12 6L9 26zM9 15l11 6 12-6M20 21v11" stroke={DARK} strokeWidth="2" strokeLinejoin="round" />
          <path d="M9 36c-4 0-4-2-4-6 0-6 0-9-4-9 4 0 4-3 4-6M31 5c4 0 4 2 4 7 0 6 0 9 4 9-4 0-4 3-4 9 0 5 0 6-4 6" stroke={DARK} strokeWidth="2" />
          <rect x="0" y="0" width="20" height="16" fill={DARK} />
          <path d="M2 2h4v4H2zM8 2h4v4H8zM14 2h4v4h-4z" fill="#999" />
          <path d="M2 8h4v2H2zM8 8h4v2H8zM14 8h4v2h-4zM2 12h4v2H2zM8 12h4v2H8zM14 12h4v2h-4z" fill="#fff" />
        </svg>
      </div>
    </div>
  );
}

function Canvas() {
  return (
    <main className="relative flex-1 bg-white">
      <WasherModel />
      <ViewCube />
      <RightRail />
      <div className="absolute top-[664px] -left-0.5 flex h-[68px] w-[66px] items-center justify-center border-y-2 border-r-2 border-[#cccccc] bg-white">
        <svg viewBox="0 0 38 36" className="-ml-0.5 h-9 w-[38px]" fill="none" stroke={DARK} strokeWidth="2">
          <path d="M17 2.500h20M11 12.500h26M11 22.500h26M11 32.500h26M7 10v26" />
          <path d="M2 2l5 5 5-5" strokeWidth="3" strokeLinecap="round" />
        </svg>
      </div>
      <div className="absolute right-[26px] bottom-[14px] flex items-end gap-10">
        <svg viewBox="0 0 34 26" className="mb-0.5 h-6 w-8" fill="none" stroke={DARK} strokeWidth="2.2">
          <ellipse cx="21.500" cy="8" rx="10.500" ry="6.500" />
          <ellipse cx="21.500" cy="8" rx="5.500" ry="2.600" />
          <path d="M11 8v6H1v10h22c6 0 9-3 9-7V8" />
          <path d="M6 24v-3M10 24v-5M14 24v-3M18 24v-5M22 24v-3M25 23v-4" strokeWidth="1.3" />
        </svg>
        <svg viewBox="0 0 28 28" className="h-7 w-7" fill="none" stroke={DARK} strokeWidth="2">
          <path d="M4 1h20M14 1v24M1.500 17 5 2l3.500 15M19.500 17 23 2l3.500 15" strokeWidth="1.6" />
          <path d="M0 16h10v4H0zM18 16h10v4H18zM0 24h28v4H0z" fill={DARK} stroke="none" />
        </svg>
      </div>
    </main>
  );
}

/* ---------- bottom tab bar ---------- */

function BottomTabs() {
  return (
    <footer className="flex h-[60px] shrink-0 items-start bg-[#d0d0d0] font-['Roboto'] text-[28px]">
      <svg viewBox="0 0 34 32" className="mt-[13px] ml-[17px] h-8 w-[34px]" fill="none" stroke="#666">
        <path d="M1 2h32" strokeWidth="4" />
        <circle cx="11" cy="17" r="8" strokeWidth="4" />
        <path d="M16 22l8 8" strokeWidth="4.5" />
        <path d="M23 11h10M25 19h8" strokeWidth="4" />
      </svg>
      <svg viewBox="0 0 30 30" className="mt-[14px] ml-[41px] size-[30px]" stroke="#555" strokeWidth="5" strokeLinecap="round">
        <path d="M15 2.500v25M2.500 15h25" />
      </svg>
      <div className="ml-[30px] flex h-14 w-[400px] items-center overflow-hidden rounded-b-xl border-b-4 border-[#1651b0] bg-white pl-6 text-[#333]">
        <svg viewBox="0 0 34 36" className="h-9 w-[34px]" fill="#fff" stroke={DARK} strokeWidth="2" strokeLinejoin="round">
          <path d="M1 9h9l5 5v21H7l-6-6z" />
          <path d="M1 9l6 6h8M7 15v20" strokeWidth="1.4" />
          <path d="M17 1h10l6 6v28H23l-6-5z" />
          <path d="M17 1l6 6h10M23 7v28" strokeWidth="1.4" />
        </svg>
        <span className="ml-[7px] pt-0.5">Part Studio 1</span>
      </div>
      <div className="ml-1 flex h-[54px] w-[400px] items-center rounded-b-xl bg-[#e8e8e8] pl-[22px] text-[#666] shadow-[0_1px_2px_rgba(0,0,0,0.2)]">
        <svg viewBox="0 0 36 36" className="h-9 w-9" fill="#fff" stroke={DARK} strokeWidth="2" strokeLinejoin="round">
          <path d="M1 1h26l8 8v26H9l-8-8z" />
          <path d="M1 1h20l5 8v17H9l-8-8z" fill="#999" />
          <path d="M1 1l8 8h26M9 9v26" strokeWidth="1.4" />
        </svg>
        <span className="ml-[8px] pt-0.5">Assembly 1</span>
      </div>
    </footer>
  );
}

export default function App() {
  return (
    <div className="flex h-[1800px] w-[2880px] flex-col overflow-hidden bg-white font-['Inter'] leading-none">
      <BrowserBar />
      <BrowserTabs />
      <DocumentHeader />
      <Toolbar />
      <div className="flex flex-1">
        <FeaturePanel />
        <Canvas />
      </div>
      <BottomTabs />
    </div>
  );
}
